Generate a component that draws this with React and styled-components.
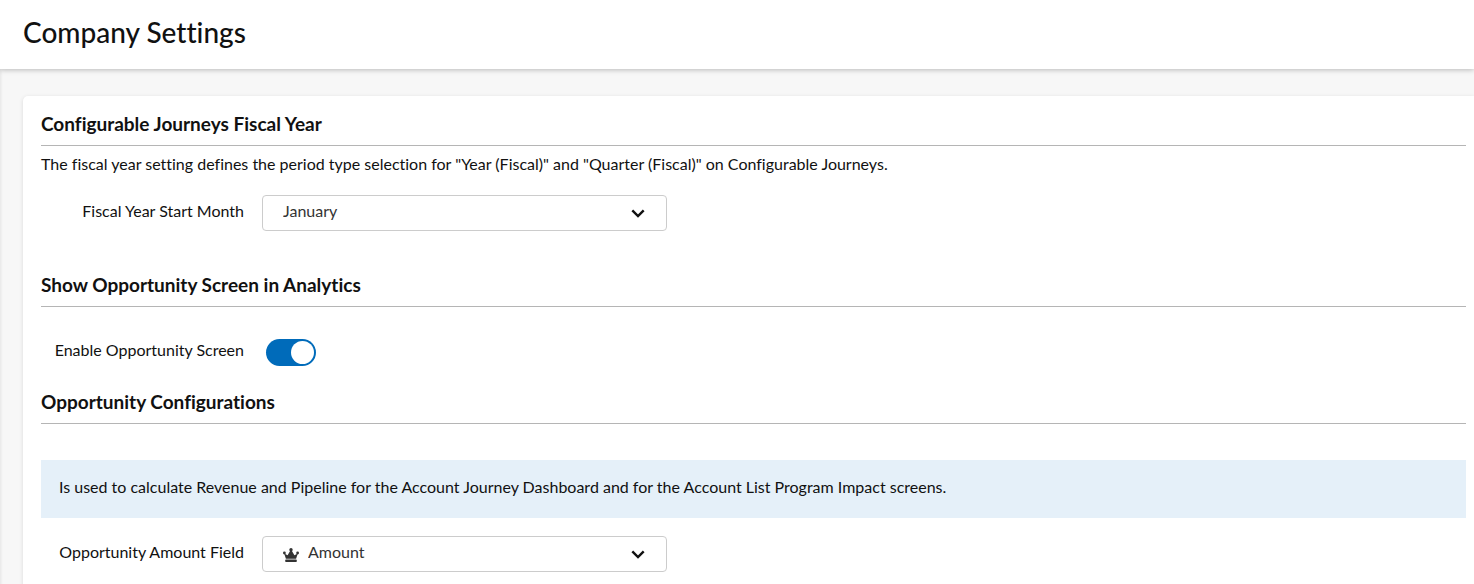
import React, { useState } from "react";
import styled, { createGlobalStyle } from "styled-components";

const MONTHS = [
  "January",
  "February",
  "March",
  "April",
  "May",
  "June",
  "July",
  "August",
  "September",
  "October",
  "November",
  "December",
];

function Chevron() {
  return (
    <ChevronIcon viewBox="0 0 14 9" aria-hidden="true">
      <path d="M1.3 1.3 7 7 12.7 1.3" />
    </ChevronIcon>
  );
}

function Crown() {
  return (
    <CrownIcon viewBox="0 0 16 14" aria-hidden="true">
      <circle cx="8" cy="1.7" r="1.7" />
      <circle cx="1.4" cy="5" r="1.4" />
      <circle cx="14.6" cy="5" r="1.4" />
      <path d="M1.2 5.4 4.6 7.2 7.2 2.8h1.6l2.6 4.4 3.4-1.8-1.7 5.4H2.9z" />
      <rect x="2.2" y="11.6" width="11.6" height="2.4" rx="0.8" />
    </CrownIcon>
  );
}

export default function App() {
  const [month, setMonth] = useState("January");
  const [enabled, setEnabled] = useState(true);
  const [amountField, setAmountField] = useState("Amount");

  return (
    <>
      <GlobalStyle />
      <Header>
        <PageTitle>Company Settings</PageTitle>
      </Header>
      <Content>
        <Card>
          <SectionTitle>Configurable Journeys Fiscal Year</SectionTitle>
          <Description>
            The fiscal year setting defines the period type selection for "Year
            (Fiscal)" and "Quarter (Fiscal)" on Configurable Journeys.
          </Description>
          <Field>
            <Label htmlFor="fiscal-month">Fiscal Year Start Month</Label>
            <SelectBox>
              <Select
                id="fiscal-month"
                value={month}
                onChange={(e) => setMonth(e.target.value)}
              >
                {MONTHS.map((item) => (
                  <option key={item} value={item}>
                    {item}
                  </option>
                ))}
              </Select>
              <Chevron />
            </SelectBox>
          </Field>

          <SectionTitle $gap="42px">
            Show Opportunity Screen in Analytics
          </SectionTitle>
          <Field $gap="27px">
            <Label htmlFor="opportunity-screen">
              Enable Opportunity Screen
            </Label>
            <Toggle
              id="opportunity-screen"
              type="checkbox"
              role="switch"
              checked={enabled}
              onChange={(e) => setEnabled(e.target.checked)}
            />
          </Field>

          <SectionTitle $gap="20px">Opportunity Configurations</SectionTitle>
          <Notice>
            Is used to calculate Revenue and Pipeline for the Account Journey
            Dashboard and for the Account List Program Impact screens.
          </Notice>
          <Field>
            <Label htmlFor="amount-field">Opportunity Amount Field</Label>
            <SelectBox>
              <Crown />
              <Select
                id="amount-field"
                $withIcon
                value={amountField}
                onChange={(e) => setAmountField(e.target.value)}
              >
                <option value="Amount">Amount</option>
              </Select>
              <Chevron />
            </SelectBox>
          </Field>
        </Card>
      </Content>
    </>
  );
}

const GlobalStyle = createGlobalStyle`
  * {
    box-sizing: border-box;
  }
  body {
    margin: 0;
    background-color: #f7f7f7;
    color: #111;
    font-family: Lato, "Liberation Sans", sans-serif;
    font-size: 16px;
    font-variant-ligatures: none;
    line-height: 24px;
    overflow: hidden;
  }
`;

const Header = styled.header`
  position: relative;
  padding: 16px 23px 21px;
  background-color: #fff;
  box-shadow: 0 1px 5px rgba(0, 0, 0, 0.25);
`;

const PageTitle = styled.h1`
  margin: 0;
  font-size: 28px;
  font-weight: 500;
  line-height: 32px;
`;

const Content = styled.main`
  padding: 27px 0 0 23px;
  box-shadow: inset 3px 0 3px -2px rgba(0, 0, 0, 0.08);
`;

const Card = styled.div`
  padding: 16px 8px 24px 18px;
  background-color: #fff;
  border-radius: 5px 0 0 5px;
  box-shadow: 0 1px 4px rgba(0, 0, 0, 0.12);
`;

const SectionTitle = styled.h2`
  margin: ${(props) => props.$gap || "0"} 0 0;
  padding-bottom: 9px;
  border-bottom: 1px solid #b5b5b5;
  font-size: 19px;
  font-weight: 700;
  line-height: 24px;
`;

const Description = styled.p`
  margin: 0;
  padding: 6px 0 1px;
`;

const Field = styled.div`
  display: grid;
  grid-template-columns: 203px minmax(0, 405px);
  column-gap: 18px;
  align-items: center;
  min-height: 36px;
  margin-top: ${(props) => props.$gap || "18px"};
`;

const Label = styled.label`
  padding-bottom: 4px;
  text-align: right;
`;

const SelectBox = styled.div`
  position: relative;
`;

const Select = styled.select`
  display: block;
  width: 100%;
  height: 36px;
  padding: 0 40px 4px ${(props) => (props.$withIcon ? "45px" : "20px")};
  appearance: none;
  border: 1px solid #ccc;
  border-radius: 4px;
  background-color: #fff;
  color: #333;
  font: inherit;
  font-variant-ligatures: none;
`;

const ChevronIcon = styled.svg`
  position: absolute;
  top: 14px;
  right: 22px;
  width: 14px;
  height: 9px;
  fill: none;
  stroke: #111;
  stroke-width: 2.4;
  pointer-events: none;
`;

const CrownIcon = styled.svg`
  position: absolute;
  top: 12px;
  left: 21px;
  width: 16px;
  height: 14px;
  fill: #333;
  pointer-events: none;
`;

const Toggle = styled.input`
  display: flex;
  align-items: center;
  justify-content: ${(props) => (props.checked ? "flex-end" : "flex-start")};
  width: 50px;
  height: 27px;
  margin: 0 0 0 4px;
  padding: 2px;
  appearance: none;
  border-radius: 14px;
  background-color: ${(props) => (props.checked ? "#006bba" : "#999")};
  cursor: pointer;

  &::before {
    content: "";
    width: 23px;
    height: 23px;
    border-radius: 50%;
    background-color: #fff;
  }
`;

const Notice = styled.div`
  margin-top: 36px;
  padding: 15px 18px 19px;
  background-color: #e5f0f9;
`;
